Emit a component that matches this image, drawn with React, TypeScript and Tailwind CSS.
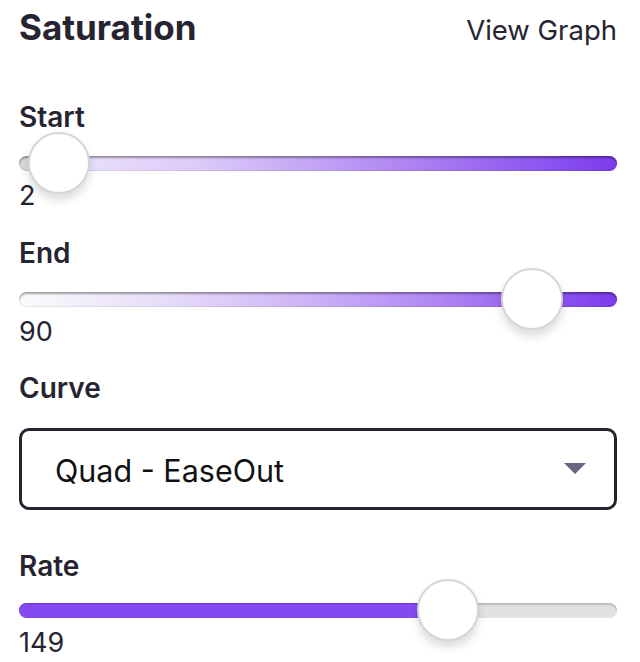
import React from "react";

const INK = "text-[#262431]";

function Thumb({ left, top }: { left: number; top: number }) {
  return (
    <div
      className="absolute w-[62px] h-[62px] rounded-full bg-white border-2 border-[#d6d6d6] shadow-[0_6px_10px_rgba(0,0,0,0.14)]"
      style={{ left: left - 31, top: top - 31 }}
    />
  );
}

function GradientSlider({
  label,
  value,
  thumbX,
  gradient,
}: {
  label: string;
  value: string;
  thumbX: number;
  gradient: string;
}) {
  return (
    <div className="flex flex-col">
      <div className={`text-[28px] leading-[32px] font-semibold ${INK}`}>{label}</div>
      <div className="relative h-[15px] mt-[23px]">
        <div
          className="absolute inset-0 rounded-full shadow-[inset_0_2px_2px_rgba(0,0,0,0.35),inset_0_-1px_1px_rgba(0,0,0,0.08)]"
          style={{ background: gradient }}
        />
        <Thumb left={thumbX} top={7} />
      </div>
      <div className={`text-[27px] leading-[30px] mt-[10px] ${INK}`}>{value}</div>
    </div>
  );
}

export default function App() {
  return (
    <div className="w-[640px] h-[662px] bg-white pl-[19px] pr-[23px] overflow-hidden font-['Inter',sans-serif]">
      <div className="flex items-baseline justify-between pt-[5px]">
        <div className={`text-[35px] leading-[44px] font-bold ${INK}`}>Saturation</div>
        <div className={`text-[27.5px] leading-[32px] ${INK}`}>View Graph</div>
      </div>

      <div className="mt-[52px]">
        <GradientSlider
          label="Start"
          value="2"
          thumbX={40}
          gradient="linear-gradient(to right, #d9d9d9 0px, #d9d9d9 14px, #ece3fb 40px, #dccbf8 30%, #b58ef3 60%, #7b3bed 100%)"
        />
      </div>
      <div className="mt-[26px]">
        <GradientSlider
          label="End"
          value="90"
          thumbX={513}
          gradient="linear-gradient(to right, #fbfbfb 0%, #e6dcf8 25%, #cbb0f6 50%, #a77bf2 75%, #7b3bed 100%)"
        />
      </div>

      <div className={`mt-[25px] text-[28px] leading-[32px] font-semibold ${INK}`}>Curve</div>
      <div className="mt-[24px] h-[82px] rounded-[10px] border-[3px] border-[#25232f] flex items-center justify-between pl-[33px] pr-[28px]">
        <span className="text-[30.5px] leading-[36px] text-[#111] pt-[3px]">Quad - EaseOut</span>
        <svg width="22" height="12" viewBox="0 0 22 12">
          <polygon points="0,0 22,0 11,11" fill="#676680" />
        </svg>
      </div>

      <div className={`mt-[40px] text-[28px] leading-[32px] font-semibold ${INK}`}>Rate</div>
      <div className="relative h-[15px] mt-[21px]">
        <div className="absolute inset-0 rounded-full bg-[#e2e2e2] shadow-[inset_0_2px_2px_rgba(0,0,0,0.18)]" />
        <div className="absolute left-0 top-0 bottom-0 w-[432px] rounded-full bg-[#8549f2] shadow-[inset_0_1px_1px_rgba(0,0,0,0.2)]" />
        <Thumb left={429} top={7} />
      </div>
      <div className={`text-[27px] leading-[30px] mt-[10px] ${INK}`}>149</div>
    </div>
  );
}
